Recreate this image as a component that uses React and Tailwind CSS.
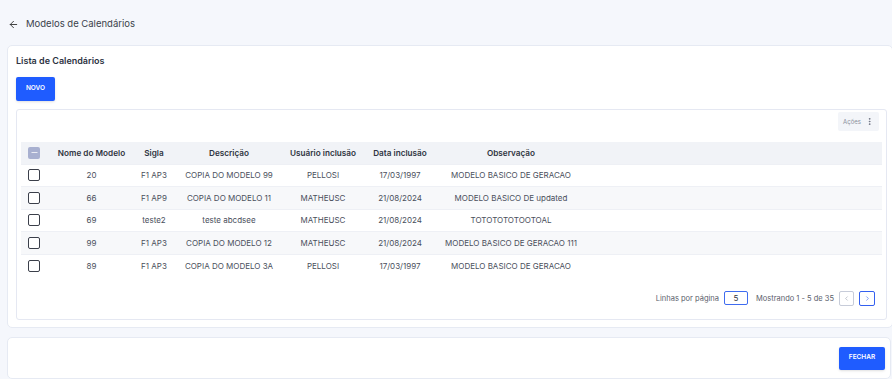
import { ArrowLeft, EllipsisVertical, ChevronLeft, ChevronRight, Minus } from 'lucide-react';

const rows = [
  { nome: '20', sigla: 'F1 AP3', desc: 'COPIA DO MODELO 99', usuario: 'PELLOSI', data: '17/03/1997', obs: 'MODELO BASICO DE GERACAO' },
  { nome: '66', sigla: 'F1 AP9', desc: 'COPIA DO MODELO 11', usuario: 'MATHEUSC', data: '21/08/2024', obs: 'MODELO BASICO DE updated' },
  { nome: '69', sigla: 'teste2', desc: 'teste abcdsee', usuario: 'MATHEUSC', data: '21/08/2024', obs: 'TOTOTOTOTOOTOAL' },
  { nome: '99', sigla: 'F1 AP3', desc: 'COPIA DO MODELO 12', usuario: 'MATHEUSC', data: '21/08/2024', obs: 'MODELO BASICO DE GERACAO 111' },
  { nome: '89', sigla: 'F1 AP3', desc: 'COPIA DO MODELO 3A', usuario: 'PELLOSI', data: '17/03/1997', obs: 'MODELO BASICO DE GERACAO' },
];

const App = () => {
  return (
    <div
      className="w-[892px] h-[379px] overflow-hidden bg-[#f5f7fc] text-[#2f3441]"
      style={{ fontFamily: 'Inter, "Liberation Sans", sans-serif' }}
    >
      {/* cabeçalho */}
      <div className="h-[45px] flex items-center pl-[8px] pt-[3px] gap-[7px]">
        <ArrowLeft size={11} strokeWidth={2} className="text-[#333]" />
        <span className="text-[9.5px] text-[#3a3f4b]">Modelos de Calendários</span>
      </div>

      {/* lista */}
      <div className="ml-[7px] w-[886px] h-[283px] bg-white border border-[#e6eaf3] rounded-[5px] px-[8px] pt-[9px]">
        <h2 className="text-[9px] font-semibold text-[#2d3342] leading-[12px]">Lista de Calendários</h2>
        <button className="mt-[10px] w-[39px] h-[24px] bg-[#1f5cff] rounded-[2px] text-white text-[6.5px] font-semibold shadow-sm">
          NOVO
        </button>

        <div className="mt-[8px] w-[871px] h-[211px] border border-[#e5e8f2] rounded-[3px] pl-[4px] pr-[5px] pt-[2px] flex flex-col">
          <div className="flex justify-end pr-[2px]">
            <button className="w-[41px] h-[19px] bg-[#f3f5f9] rounded-[2px] flex items-center justify-center gap-[4px] text-[6px] text-[#8a8f9c]">
              Ações
              <EllipsisVertical size={9} strokeWidth={2.5} className="text-[#6b7080]" />
            </button>
          </div>

          <table className="mt-[11px] w-[861px] table-fixed border-collapse text-center">
            <thead>
              <tr className="h-[22px] bg-[#f1f3f7] text-[8.2px] font-semibold text-[#2f3441]">
                <th className="w-[27px] pl-[7px]">
                  <div className="w-[12px] h-[12px] rounded-[2px] bg-[#a8b0d0] flex items-center justify-center">
                    <Minus size={9} strokeWidth={2} className="text-white" />
                  </div>
                </th>
                <th className="w-[87px] font-semibold">Nome do Modelo</th>
                <th className="w-[38px] font-semibold">Sigla</th>
                <th className="w-[112px] font-semibold">Descrição</th>
                <th className="w-[76px] font-semibold">Usuário inclusão</th>
                <th className="w-[78px] font-semibold">Data inclusão</th>
                <th className="w-[144px] font-semibold">Observação</th>
                <th></th>
              </tr>
            </thead>
            <tbody className="text-[8px] text-[#4a4f5c]">
              {rows.map((r, i) => (
                <tr
                  key={i}
                  className={`h-[22.6px] border-t border-[#eef0f5] ${i % 2 === 1 ? 'bg-[#f7f8fa]' : 'bg-white'}`}
                >
                  <td className="pl-[7px]">
                    <div className="w-[12px] h-[12px] rounded-[2px] border-[1.5px] border-[#3b3f4a] bg-white"></div>
                  </td>
                  <td>{r.nome}</td>
                  <td>{r.sigla}</td>
                  <td>{r.desc}</td>
                  <td>{r.usuario}</td>
                  <td>{r.data}</td>
                  <td>{r.obs}</td>
                  <td></td>
                </tr>
              ))}
            </tbody>
          </table>

          {/* paginação */}
          <div className="mt-[14px] flex items-center justify-end gap-[5px] pr-[6px] text-[7.5px] text-[#5b606c]">
            <span>Linhas por página</span>
            <div className="w-[24px] h-[14px] border border-[#3f6cf0] rounded-[2px] flex items-center justify-center text-[8px] text-[#2f3441]">
              5
            </div>
            <span className="ml-[3px]">Mostrando 1 - 5 de 35</span>
            <button className="w-[15px] h-[15px] border border-[#c7ccd9] rounded-[2px] flex items-center justify-center text-[#9aa0b0]">
              <ChevronLeft size={7} strokeWidth={2} />
            </button>
            <button className="w-[16px] h-[15px] border border-[#3460f0] rounded-[2px] flex items-center justify-center text-[#3460f0]">
              <ChevronRight size={7} strokeWidth={2} />
            </button>
          </div>
        </div>
      </div>

      {/* rodapé */}
      <div className="mt-[9px] ml-[7px] w-[884px] h-[42px] bg-white border border-[#e6eaf3] rounded-[5px] flex items-center justify-end pr-[5px]">
        <button className="w-[46px] h-[23px] bg-[#1f5cff] rounded-[2px] text-white text-[6.5px] font-semibold shadow-sm">
          FECHAR
        </button>
      </div>
    </div>
  );
};

export default App;
